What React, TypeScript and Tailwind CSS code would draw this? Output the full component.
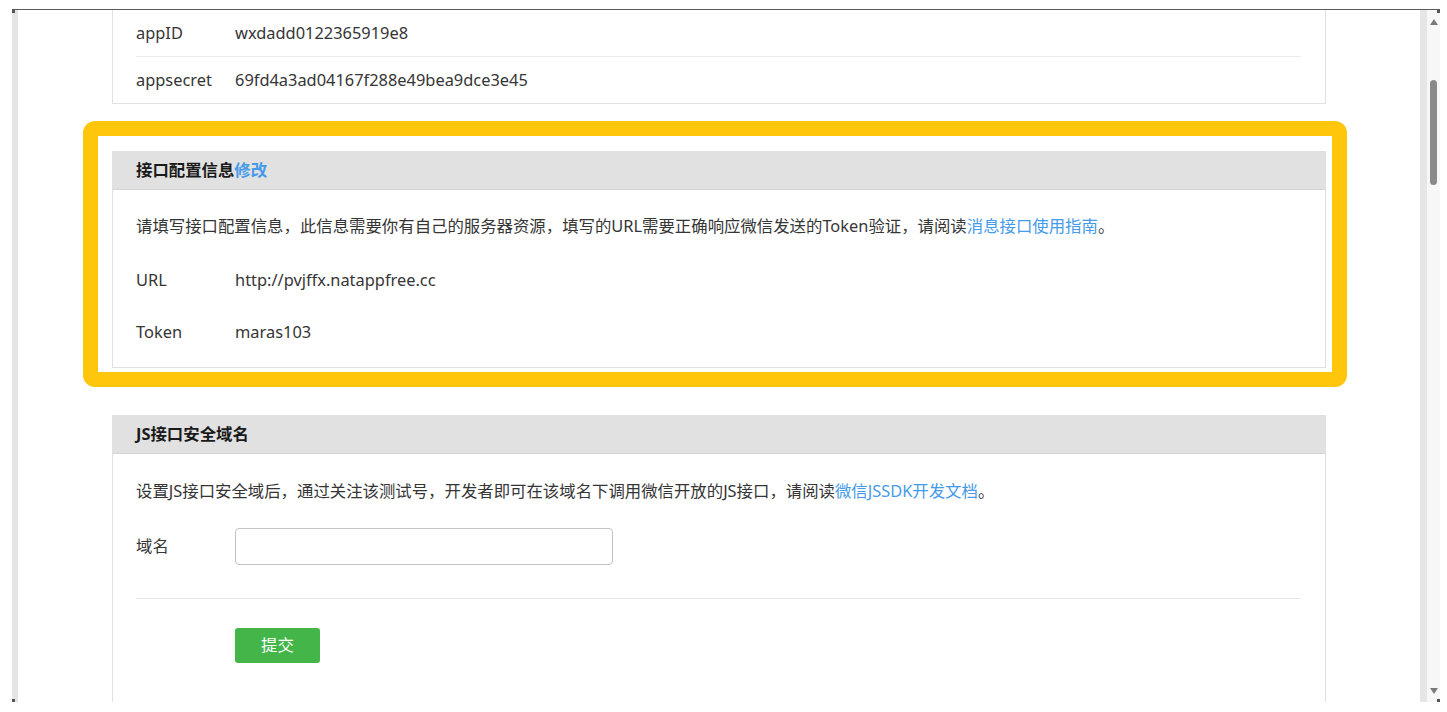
import React from "react";

const font = '"Noto Sans", "Noto Sans CJK SC", sans-serif';

function Row({ label, value }: { label: string; value: React.ReactNode }) {
  return (
    <div className="flex items-center">
      <div className="w-[99px] shrink-0">{label}</div>
      <div>{value}</div>
    </div>
  );
}

export default function App() {
  return (
    <div
      className="w-[1447px] h-[712px] bg-white overflow-hidden text-[16.4px] text-[#353535]"
      style={{ fontFamily: font }}
    >
      <div className="pt-[9px] pl-[12px] w-[1440px]">
        <div className="flex h-[693px] border-t border-[#5a5a5a]">
          {/* left window strip */}
          <div className="w-[6px] bg-[#e4e4e7] flex flex-col justify-between">
            <div className="h-[3px] w-[3px] bg-[#555]" />
            <div className="h-[3px] w-[3px] bg-[#555]" />
          </div>

          {/* content */}
          <div className="flex-1 overflow-hidden flex flex-col">
            {/* card 1 (clipped top) */}
            <div className="mx-[94px] border-x border-b border-[#e2e2e2] bg-white">
              <div className="pl-[23px] pr-[24px]">
                <div className="h-[47px] flex items-center border-b border-[#ececec]">
                  <Row label="appID" value="wxdadd0122365919e8" />
                </div>
                <div className="h-[46px] flex items-center">
                  <Row label="appsecret" value="69fd4a3ad04167f288e49bea9dce3e45" />
                </div>
              </div>
            </div>

            {/* highlighted card */}
            <div className="mt-[17px] ml-[65px] mr-[73px] border-[15px] border-[#ffc60b] rounded-[12px] pl-[14px] pr-[6px] pt-[15px] pb-[4px]">
              <div className="border border-[#e0e0e0] bg-white">
                <div className="h-[38px] bg-[#e1e1e1] border-b border-[#d4d4d4] pl-[23px] pr-[24px] flex items-center font-bold text-[#1a1a1a]">
                  接口配置信息<span className="text-[#459ae9]">修改</span>
                </div>
                <div className="pl-[23px] pr-[24px] pt-[24px] pb-[9px]">
                  <div className="h-[24px] leading-[24px] whitespace-nowrap">
                    请填写接口配置信息，此信息需要你有自己的服务器资源，填写的URL需要正确响应微信发送的Token验证，请阅读
                    <span className="text-[#459ae9]">消息接口使用指南</span>。
                  </div>
                  <div className="mt-[16px] h-[52px] flex items-center">
                    <Row label="URL" value="http://pvjffx.natappfree.cc" />
                  </div>
                  <div className="h-[52px] flex items-center">
                    <Row label="Token" value="maras103" />
                  </div>
                </div>
              </div>
            </div>

            {/* JS card */}
            <div className="mt-[28px] mx-[94px] border-x border-t border-[#e0e0e0] bg-white flex-1">
              <div className="h-[38px] bg-[#e1e1e1] border-b border-[#d4d4d4] pl-[23px] pr-[24px] flex items-center font-bold text-[#1a1a1a]">
                JS接口安全域名
              </div>
              <div className="pl-[23px] pr-[24px] pt-[25px]">
                <div className="h-[24px] leading-[24px] whitespace-nowrap">
                  设置JS接口安全域后，通过关注该测试号，开发者即可在该域名下调用微信开放的JS接口，请阅读
                  <span className="text-[#459ae9]">微信JSSDK开发文档</span>。
                </div>
                <div className="mt-[25px] flex items-center">
                  <div className="w-[99px] shrink-0">域名</div>
                  <input
                    type="text"
                    className="w-[378px] h-[37px] border border-[#c4c4c4] rounded-[4px] px-2 outline-none bg-white"
                  />
                </div>
                <div className="mt-[33px] border-t border-[#e8e8e8]" />
                <div className="mt-[29px] pl-[99px]">
                  <button className="w-[85px] h-[35px] bg-[#44b549] text-white rounded-[3px] text-[16.4px]">
                    提交
                  </button>
                </div>
              </div>
            </div>
          </div>

          {/* right window strip */}
          <div className="w-[7px] bg-[#e6e6e9]" />
          {/* scrollbar */}
          <div className="w-[13px] bg-[#f7f7f7] flex flex-col items-center">
            <div className="h-[3px] w-full flex justify-end">
              <div className="w-[3px] h-[3px] bg-[#555]" />
            </div>
            <svg width="8" height="6" viewBox="0 0 8 6" className="mt-[6px]">
              <polygon points="4,0 8,6 0,6" fill="#7a7a7a" />
            </svg>
            <div className="mt-[55px] w-[7px] h-[105px] rounded-full bg-[#8a8a8a]" />
            <div className="flex-1" />
            <svg width="8" height="6" viewBox="0 0 8 6" className="mb-[5px]">
              <polygon points="0,0 8,0 4,6" fill="#7a7a7a" />
            </svg>
            <div className="h-[3px] w-full flex justify-end">
              <div className="w-[3px] h-[3px] bg-[#555]" />
            </div>
          </div>
        </div>
      </div>
    </div>
  );
}
